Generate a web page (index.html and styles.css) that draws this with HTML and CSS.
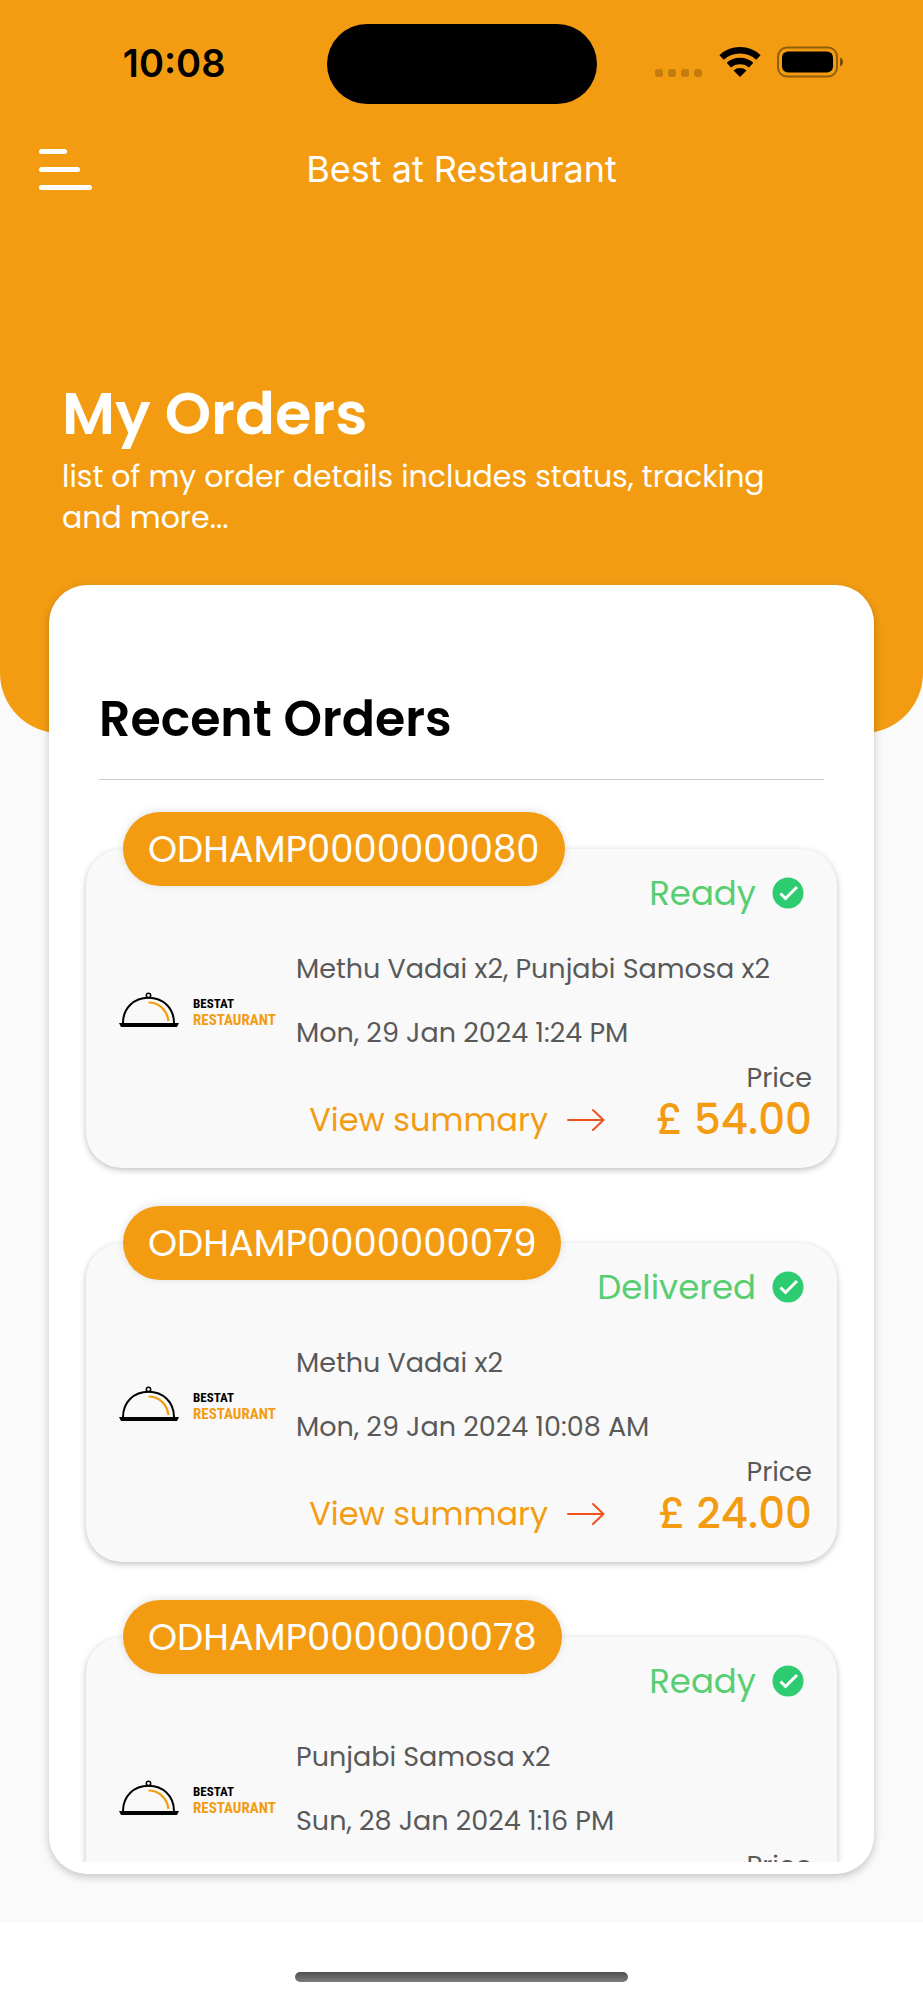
FILE: index.html
```html
<!DOCTYPE html>
<html lang="en">
<head>
<meta charset="utf-8">
<meta name="viewport" content="width=device-width, initial-scale=1">
<title>My Orders</title>
<link rel="stylesheet" href="styles.css">
</head>
<body>
<svg class="defs" aria-hidden="true">
  <symbol id="dome" viewBox="0 0 60 36">
    <circle cx="29.500" cy="3.500" r="2.200" fill="none" stroke="#000" stroke-width="1.500"/>
    <path d="M4 31C4 16 15 5.800 29.500 5.800S55 16 55 31" fill="none" stroke="#000" stroke-width="2"/>
    <path d="M29.500 10.500C40 10.500 48 18 49.500 29" fill="none" stroke="#f39c12" stroke-width="2.200"/>
    <path d="M0 31h60l-2 4H2z"/>
  </symbol>
  <symbol id="check" viewBox="0 0 32 32">
    <circle cx="16" cy="16" r="15.500" fill="#2ecc71"/>
    <path d="M8.500 16.500l5 5L25 10" fill="none" stroke="#fff" stroke-width="3"/>
  </symbol>
  <symbol id="arrow" viewBox="0 0 38 24">
    <path d="M1 12h35M26 2l10.500 10L26 22" fill="none" stroke="#f4511e" stroke-width="2" stroke-linecap="round" stroke-linejoin="round"/>
  </symbol>
</svg>
<header class="header">
  <div class="status-bar">
    <time class="clock">10:08</time>
    <div class="island"></div>
    <div class="indicators">
      <svg width="48" height="32" viewBox="0 0 48 32" fill="#000" fill-opacity=".2" aria-label="No signal"><rect y="23" width="8" height="8" rx="2.500"/><rect x="13" y="23" width="8" height="8" rx="2.500"/><rect x="26" y="23" width="8" height="8" rx="2.500"/><rect x="39" y="23" width="8" height="8" rx="2.500"/></svg>
      <svg width="42" height="32" viewBox="0 0 42 32" aria-label="Wi-Fi"><g fill="none" stroke="#000" stroke-width="6.400"><path d="M2.600 11.500A27 27 0 0 1 39.400 11.500"/><path d="M9.800 19.200A17 17 0 0 1 32.200 19.200"/></g><path d="M14.500 24.500a10 10 0 0 1 13 0L21 31z"/></svg>
      <svg width="68" height="32" viewBox="0 0 68 32" aria-label="Battery full"><rect x="1" y="1.500" width="59" height="29" rx="9" fill="none" stroke="#000" stroke-opacity=".4" stroke-width="2"/><rect x="5" y="5.500" width="51" height="21" rx="6"/><path d="M63 11.500c4 1 4 8 0 9z" fill-opacity=".5"/></svg>
    </div>
  </div>
  <nav class="nav">
    <button class="menu" type="button" aria-label="Menu"><span class="bar short"></span><span class="bar mid"></span><span class="bar"></span></button>
    <span class="brand">Best at Restaurant</span>
  </nav>
  <div class="hero">
    <h1 class="title">My Orders</h1>
    <p class="subtitle">list of my order details includes status, tracking<br>and more...</p>
  </div>
</header>
<main class="panel">
  <h2 class="heading">Recent Orders</h2>
  <ul class="orders">
    <li class="order">
      <span class="order-id">ODHAMP0000000080</span>
      <div class="state">Ready <svg width="32" height="32"><use href="#check"/></svg></div>
      <div class="body">
        <div class="logo"><svg width="60" height="36"><use href="#dome"/></svg><div class="logo-text"><span class="logo-top">BESTAT</span><span class="logo-bottom">RESTAURANT</span></div></div>
        <div class="info"><p>Methu Vadai x2, Punjabi Samosa x2</p><p>Mon, 29 Jan 2024 1:24 PM</p></div>
      </div>
      <div class="foot">
        <a class="summary" href="#order-80">View summary <svg width="38" height="24"><use href="#arrow"/></svg></a>
        <div class="price">Price<strong class="amount">£ 54.00</strong></div>
      </div>
    </li>
    <li class="order">
      <span class="order-id">ODHAMP0000000079</span>
      <div class="state">Delivered <svg width="32" height="32"><use href="#check"/></svg></div>
      <div class="body">
        <div class="logo"><svg width="60" height="36"><use href="#dome"/></svg><div class="logo-text"><span class="logo-top">BESTAT</span><span class="logo-bottom">RESTAURANT</span></div></div>
        <div class="info"><p>Methu Vadai x2</p><p>Mon, 29 Jan 2024 10:08 AM</p></div>
      </div>
      <div class="foot">
        <a class="summary" href="#order-79">View summary <svg width="38" height="24"><use href="#arrow"/></svg></a>
        <div class="price">Price<strong class="amount">£ 24.00</strong></div>
      </div>
    </li>
    <li class="order">
      <span class="order-id">ODHAMP0000000078</span>
      <div class="state">Ready <svg width="32" height="32"><use href="#check"/></svg></div>
      <div class="body">
        <div class="logo"><svg width="60" height="36"><use href="#dome"/></svg><div class="logo-text"><span class="logo-top">BESTAT</span><span class="logo-bottom">RESTAURANT</span></div></div>
        <div class="info"><p>Punjabi Samosa x2</p><p>Sun, 28 Jan 2024 1:16 PM</p></div>
      </div>
      <div class="foot">
        <div class="price">Price</div>
      </div>
    </li>
  </ul>
</main>
<footer class="home-area"><div class="home-indicator"></div></footer>
</body>
</html>
```

FILE: styles.css
```css
* { box-sizing: border-box; }

body {
  margin: 0;
  height: 100vh;
  display: flex;
  flex-direction: column;
  background: #fafafa;
  color: #000;
  font-family: Poppins, Inter, "Open Sans", sans-serif;
}

h1, h2, p, ul { margin: 0; padding: 0; }
.defs { position: absolute; width: 0; height: 0; }
svg { display: block; flex: none; }

.header {
  flex: none;
  padding-bottom: 195px;
  background: #f39c12;
  border-radius: 0 0 60px 60px;
  color: #fff;
}

.status-bar {
  display: grid;
  grid-template-columns: 1fr 270px 1fr;
  align-items: center;
  padding-top: 24px;
}
.clock {
  justify-self: end;
  margin-right: 101px;
  padding-bottom: 2px;
  color: #000;
  font: 600 38px/48px Inter, sans-serif;
}
.island { height: 80px; border-radius: 40px; background: #000; }
.indicators { display: flex; gap: 16px; padding: 0 0 4px 58px; }

.nav {
  display: grid;
  grid-template-columns: 1fr auto 1fr;
  align-items: center;
  padding: 41px 39px 0;
}
.menu {
  display: flex;
  flex-direction: column;
  gap: 13px;
  width: 53px;
  padding: 0;
  border: 0;
  background: none;
}
.bar { width: 100%; height: 5px; border-radius: 3px; background: #fff; }
.short { width: 28px; }
.mid { width: 41px; }
.brand { font: 400 36px/48px Inter, sans-serif; }

.hero { padding: 179px 62px 0; }
.title { font-size: 59px; font-weight: 600; line-height: 84px; }
.subtitle { font-size: 30px; line-height: 41px; }

.panel {
  position: relative;
  flex: 1;
  min-height: 0;
  display: flex;
  flex-direction: column;
  margin: -148px 49px 49px;
  padding: 98px 13px 12px;
  border-radius: 38px;
  background: #fff;
  box-shadow: 0 3px 8px rgba(0, 0, 0, .22);
}
.heading {
  margin: 0 37px;
  padding-bottom: 24px;
  border-bottom: 1px solid #ccc;
  font-size: 49px;
  font-weight: 600;
  line-height: 72px;
}
.orders {
  flex: 1;
  min-height: 0;
  overflow: hidden;
  padding: 69px 24px 0;
  list-style: none;
}
.order {
  position: relative;
  margin-bottom: 75px;
  padding: 20px 25px 26px 33px;
  border-radius: 36px;
  background: #f9f9f9;
  box-shadow: 0 2px 6px rgba(0, 0, 0, .25);
}
.order-id {
  position: absolute;
  top: -37px;
  left: 37px;
  padding: 0 25px;
  border-radius: 37px;
  background: #f39c12;
  box-shadow: 0 -1px 8px rgba(0, 0, 0, .12);
  color: #fff;
  font-size: 37px;
  line-height: 74px;
}
.state {
  display: flex;
  justify-content: flex-end;
  align-items: center;
  gap: 16px;
  padding-right: 8px;
  color: #58ce72;
  font-size: 34px;
  line-height: 48px;
}
.body { display: flex; gap: 20px; margin-top: 32px; }
.logo { display: flex; align-items: flex-end; gap: 14px; width: 157px; padding-bottom: 25px; }
.logo-text {
  display: flex;
  flex-direction: column;
  font-family: "Roboto Condensed", "Liberation Sans Narrow", "Liberation Sans", sans-serif;
  font-weight: 700;
  line-height: 16px;
}
.logo-top { font-size: 13px; }
.logo-bottom { font-size: 15px; color: #f39c12; }
.info { display: grid; gap: 24px; font-size: 27px; line-height: 40px; color: #595959; }
.foot { display: flex; justify-content: flex-end; align-items: flex-end; gap: 51px; margin-top: 5px; }
.summary {
  display: flex;
  align-items: center;
  gap: 19px;
  color: #f39c12;
  font-size: 32px;
  line-height: 44px;
  text-decoration: none;
}
.price { min-width: 156px; color: #595959; font-size: 27px; line-height: 40px; text-align: right; }
.amount { display: block; color: #f39c12; font-size: 42px; font-weight: 500; line-height: 44px; }

.home-area { flex: none; padding: 49px 0 18px; background: #fff; }
.home-indicator {
  width: 36%;
  height: 10px;
  margin: 0 auto;
  border-radius: 5px;
  background: linear-gradient(#505050, #7c7c7c);
}
```
